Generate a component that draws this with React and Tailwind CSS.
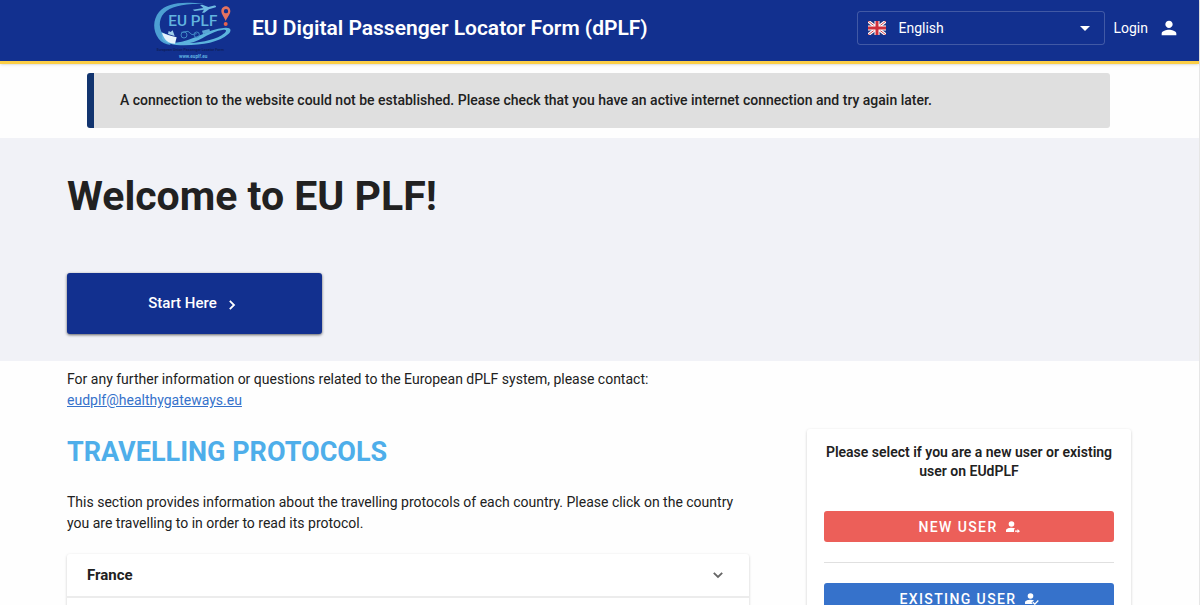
import { useState } from 'react';
import { MdPerson } from 'react-icons/md';

function Logo() {
  return (
    <svg viewBox="36 0 240 180" className="h-[60px] w-20 shrink-0" role="img" aria-label="EU PLF">
      <path
        d="M192 12C130 3 80 8 57 36C38 60 38 92 56 116C64 127 76 133 92 135L74 112C56 88 54 60 72 40C92 17 136 10 192 12Z"
        fill="#4c9fd3"
      />
      <path
        d="M64 96C80 104 106 110 106 128C160 124 196 88 256 83C274 82 276 92 264 103C238 126 190 136 132 136C100 136 76 130 66 116ZM150 129C190 127 232 118 254 99C262 92 258 88 247 90C212 94 188 120 150 129Z"
        fill="#5cb3dd"
        fillRule="evenodd"
      />
      <path d="M66 98C78 104 94 107 110 112L105 131C86 131 72 120 66 98Z" fill="#e6f3fb" />
      <path d="M84 102L86 93L92 96L98 91L104 108Z" fill="#9fcfeb" />
      <path
        d="M158 29L190 24L180 15L187 14L205 21L220 17C227 15 230 18 227 22L207 28L193 38L186 38L192 29L164 33Z"
        fill="#6fbbe2"
      />
      <g fill="none" stroke="#4189c6" strokeWidth="3">
        <circle cx="132" cy="105" r="9" />
        <circle cx="170" cy="104" r="8" />
        <path d="M124 97L144 94L156 104L170 101" />
      </g>
      <path d="M186 92L208 87L211 97L189 102Z" fill="#5aa5d6" />
      <path
        d="M258 19C249 19 244 26 244 34C244 43 253 51 257 63C262 51 271 43 271 34C271 26 266 19 258 19ZM258 27A6 6 0 1 1 258 40A6 6 0 1 1 258 27Z"
        fill="#e5735f"
        fillRule="evenodd"
      />
      <circle cx="257" cy="72" r="6" fill="#e5624e" />
      <text x="85" y="79" fill="#62b4df" fontSize="46" fontWeight="500" fontFamily="Roboto, sans-serif">EU PLF</text>
      <text x="50" y="152" fill="#101f5b" fontSize="11" fontWeight="700" fontFamily="Roboto, sans-serif">
        European Union Passenger Locator Form
      </text>
      <text x="117" y="173" fill="#5fb2e0" fontSize="14" fontWeight="700" fontFamily="Roboto, sans-serif">www.euplf.eu</text>
    </svg>
  );
}

function Flag() {
  return (
    <svg viewBox="0 0 18 14" className="h-3.5 w-[18px] shrink-0" aria-hidden="true">
      <rect width="18" height="14" fill="#22367d" />
      <path d="M0 0L18 14M18 0L0 14" stroke="#fff" strokeWidth="3" />
      <path d="M0 0L18 14M18 0L0 14" stroke="#d0414d" strokeWidth="1" />
      <path d="M9 0V14M0 7H18" stroke="#fff" strokeWidth="5" />
      <path d="M9 0V14M0 7H18" stroke="#cf2f3c" strokeWidth="3" />
    </svg>
  );
}

function UserIcon({ children }) {
  return (
    <svg viewBox="0 0 14 12" className="h-3 w-3.5 shrink-0" aria-hidden="true">
      <circle cx="5.5" cy="3" r="2.8" fill="currentColor" />
      {children}
    </svg>
  );
}

function Chevron({ className }) {
  return (
    <svg viewBox="0 0 10 10" className={className} fill="none" stroke="currentColor" strokeWidth="1.8" aria-hidden="true">
      <path d="M0.8 2.8L5 7L9.2 2.8" />
    </svg>
  );
}

function Header() {
  const [language, setLanguage] = useState('en');

  return (
    <header className="relative flex items-start border-b-[3px] border-[#fccf47] bg-[#12308f] pr-[19px] pb-px pl-[152px] text-white shadow">
      <Logo />
      <h1 className="ml-5 flex-1 pt-3.5 text-[21px] leading-7 font-semibold">EU Digital Passenger Locator Form (dPLF)</h1>
      <label className="mt-[11px] flex h-[34px] w-[248px] items-center rounded-[3px] border border-white/20 pr-3.5 pl-2.5 text-sm">
        <Flag />
        <select
          aria-label="Language"
          value={language}
          onChange={(e) => setLanguage(e.target.value)}
          className="ml-3 flex-1 appearance-none bg-transparent outline-none"
        >
          <option value="en">English</option>
        </select>
        <svg viewBox="0 0 10 5" className="h-[5px] w-2.5" aria-hidden="true">
          <path d="M0 0H10L5 5Z" fill="currentColor" />
        </svg>
      </label>
      <a href="#login" className="mt-[11px] ml-2 flex h-[34px] items-center gap-2.5 text-sm">
        Login
        <MdPerson className="size-[22px]" />
      </a>
    </header>
  );
}

function ConnectionAlert() {
  return (
    <div
      role="alert"
      className="mt-[9px] mr-[89px] mb-2.5 ml-[87px] rounded-[3px] border-l-[7px] border-[#12346f] bg-[#dfdfdf] py-[17px] pl-[26px] text-sm leading-[21px] font-medium"
    >
      A connection to the website could not be established. Please check that you have an active internet connection and
      try again later.
    </div>
  );
}

function Welcome() {
  return (
    <section className="bg-[#f1f2f7] px-[67px] pt-8 pb-[27px]">
      <h2 className="text-[41px] leading-[52px] font-bold">Welcome to EU PLF!</h2>
      <button className="mt-[51px] flex h-[61px] w-[255px] items-center justify-center gap-2.5 rounded-[3px] bg-[#12308f] pr-1 text-[15px] font-medium text-white shadow-[0_1px_3px_rgba(0,0,0,0.6)]">
        Start Here
        <Chevron className="mt-0.5 size-2.5 -rotate-90" />
      </button>
    </section>
  );
}

function Protocols() {
  const countries = ['France'];

  return (
    <div className="flex-1">
      <h2 className="mt-[5px] text-[27px] leading-9 font-bold text-[#4eaeea]">TRAVELLING PROTOCOLS</h2>
      <p className="mt-[22px] text-sm leading-[21px]">
        This section provides information about the travelling protocols of each country. Please click on the country you
        are travelling to in order to read its protocol.
      </p>
      <div className="mt-5 rounded-[3px] bg-white pb-11 shadow-[0_1px_3px_rgba(0,0,0,0.2)]">
        {countries.map((country) => (
          <button
            key={country}
            className="flex h-11 w-full items-center justify-between border-b-2 border-[#ececec] pr-[26px] pl-5 text-[15px] font-bold"
          >
            {country}
            <Chevron className="size-2.5 text-[#666]" />
          </button>
        ))}
      </div>
    </div>
  );
}

function UserCard() {
  return (
    <aside className="w-[324px] shrink-0 rounded-[3px] bg-white px-[17px] pt-3.5 pb-6 text-center shadow-[0_1px_3px_rgba(0,0,0,0.2)]">
      <p className="text-sm leading-[19px] font-semibold">Please select if you are a new user or existing user on EUdPLF</p>
      <button className="mt-[30px] flex h-[31px] w-full items-center justify-center gap-2 rounded-[3px] bg-[#ec5f59] text-sm font-medium tracking-widest text-white">
        NEW USER
        <UserIcon>
          <path d="M0 11V9.5C0 7.5 3 6.7 5.5 6.7C6.8 6.7 8 6.9 9 7.3L8 8.8V11Z" fill="currentColor" />
          <path d="M9 9.5H11.5V8L14 10.2L11.5 12V10.8H9Z" fill="currentColor" />
        </UserIcon>
      </button>
      <hr className="my-5 border-[#e0e0e0]" />
      <button className="flex h-[31px] w-full items-center justify-center gap-2 rounded-[3px] bg-[#3672cb] text-sm font-medium tracking-widest text-white">
        EXISTING USER
        <UserIcon>
          <path d="M0 11V9.5C0 7.5 3 6.7 5.5 6.7C6.8 6.7 8 6.9 9 7.3L6.5 9.5L8 11Z" fill="currentColor" />
          <path d="M7.8 9.3L9.8 11.2L13.3 7.5" fill="none" stroke="currentColor" strokeWidth="1.3" />
        </UserIcon>
      </button>
    </aside>
  );
}

export default function App() {
  return (
    <div className="min-h-screen border-r border-[#e6e6e6] bg-[#fefefe] font-['Roboto',sans-serif] text-[#212121]">
      <Header />
      <ConnectionAlert />
      <Welcome />
      <main className="pt-2 pr-[68px] pl-[67px]">
        <p className="text-sm leading-[21px]">
          For any further information or questions related to the European dPLF system, please contact:
          <br />
          <a href="mailto:eudplf@healthygateways.eu" className="text-[#3672cb] underline">
            eudplf@healthygateways.eu
          </a>
        </p>
        <div className="mt-[18px] flex items-start gap-[58px]">
          <Protocols />
          <UserCard />
        </div>
      </main>
    </div>
  );
}
